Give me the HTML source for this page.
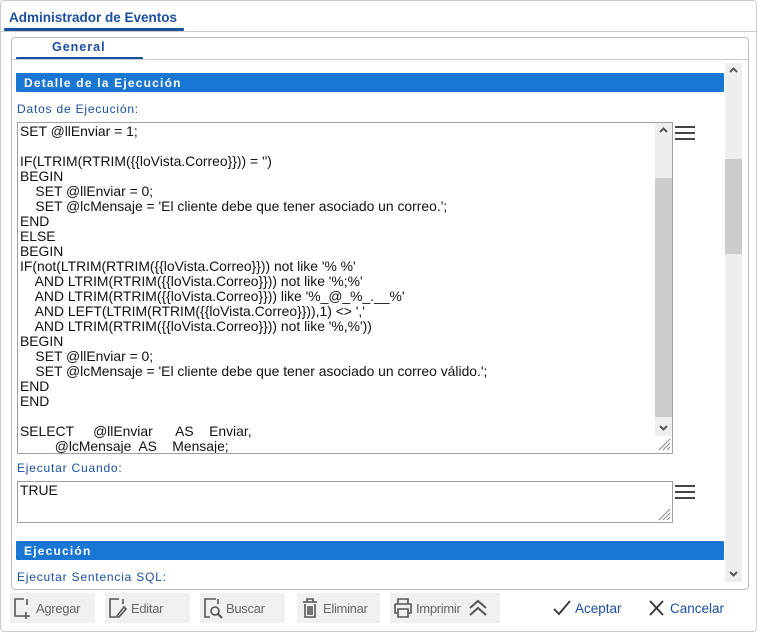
<!DOCTYPE html>
<html><head><meta charset="utf-8"><style>
*{box-sizing:border-box;margin:0;padding:0}
body{width:757px;height:632px;background:#fff;position:relative;overflow:hidden;font-family:"Liberation Sans",sans-serif}
.a{position:absolute}
.lbl{position:absolute;left:17px;font-size:12px;color:#1a4fa0;letter-spacing:0.8px}
.hdr{position:absolute;left:16px;width:708px;height:19px;background:#1976d2;color:#fff;font-weight:bold;font-size:12px;padding:3px 0 0 8px;letter-spacing:1.2px;border-radius:1px}
.ta{position:absolute;left:17px;width:656px;border:1px solid #a0a0a0;background:#fff;font-size:13.9px;color:#111;line-height:15px;padding:1px 0 0 2px;white-space:pre;overflow:hidden}
.hb{position:absolute;width:20px;height:14px;border-top:2px solid #444;border-bottom:2px solid #444}
.hb:after{content:"";position:absolute;left:0;right:0;top:4px;border-top:2px solid #444}
.btn{position:absolute;top:593px;height:30px;background:#f0f0f0;font-size:13px;color:#666;display:flex;align-items:center;letter-spacing:-0.3px}
.btn svg{margin:0 2px 0 2px}
</style></head><body>
<div class="a" style="left:0;top:0;width:757px;height:632px;border:1px solid #ccc;border-radius:4px"></div>
<div class="a" style="left:9px;top:10px;font-size:13.5px;font-weight:bold;color:#1a4fa0">Administrador de Eventos</div>
<div class="a" style="left:4px;top:28px;width:180px;height:3px;background:#1a4fa0;border-radius:1px"></div>
<div class="a" style="left:1px;top:31px;width:755px;height:1px;background:#ccc"></div>
<div class="a" style="left:11px;top:37px;width:738px;height:553px;border:1px solid #bbb;border-radius:4px"></div>
<div class="a" style="left:52px;top:40px;font-size:12.5px;font-weight:bold;color:#1a4fa0;letter-spacing:1px">General</div>
<div class="a" style="left:16px;top:57px;width:127px;height:3px;background:#1a4fa0;border-radius:1px"></div>
<div class="a" style="left:12px;top:59px;width:736px;height:1px;background:#ccc"></div>
<div class="a" style="left:725px;top:63px;width:17px;height:519px;background:#eee"></div>
<div class="a" style="left:725px;top:159px;width:17px;height:95px;background:#ccc"></div>
<svg class="a" style="left:728px;top:66px" width="11" height="8"><path d="M2 6L5.5 2.5L9 6" stroke="#555" stroke-width="2" fill="none"/></svg>
<svg class="a" style="left:728px;top:570px" width="11" height="8"><path d="M2 2L5.5 5.5L9 2" stroke="#555" stroke-width="2" fill="none"/></svg>
<div class="hdr" style="top:73px">Detalle de la Ejecución</div>
<div class="lbl" style="top:102px">Datos de Ejecución:</div>
<div class="ta" style="top:122px;height:332px">SET @llEnviar = 1;

IF(LTRIM(RTRIM({{loVista.Correo}})) = '')
BEGIN
    SET @llEnviar = 0;
    SET @lcMensaje = 'El cliente debe que tener asociado un correo.';
END
ELSE
BEGIN
IF(not(LTRIM(RTRIM({{loVista.Correo}})) not like '% %'
    AND LTRIM(RTRIM({{loVista.Correo}})) not like '%;%'
    AND LTRIM(RTRIM({{loVista.Correo}})) like '%_@_%_.__%'
    AND LEFT(LTRIM(RTRIM({{loVista.Correo}})),1) &lt;&gt; ','
    AND LTRIM(RTRIM({{loVista.Correo}})) not like '%,%'))
BEGIN
    SET @llEnviar = 0;
    SET @lcMensaje = 'El cliente debe que tener asociado un correo válido.';
END
END

SELECT     @llEnviar      AS    Enviar,
         @lcMensaje  AS    Mensaje;</div>
<div class="a" style="left:655px;top:123px;width:17px;height:313px;background:#eee"></div>
<div class="a" style="left:655px;top:178px;width:17px;height:239px;background:#ccc"></div>
<svg class="a" style="left:658px;top:126px" width="11" height="8"><path d="M2 6L5.5 2.5L9 6" stroke="#555" stroke-width="2" fill="none"/></svg>
<svg class="a" style="left:658px;top:424px" width="11" height="8"><path d="M2 2L5.5 5.5L9 2" stroke="#555" stroke-width="2" fill="none"/></svg>
<svg class="a" style="left:657px;top:437px" width="14" height="14"><path d="M2 13L13 2M6 13L13 6M10 13L13 10" stroke="#888" stroke-width="1"/></svg>
<div class="hb" style="left:675px;top:126px"></div>
<div class="lbl" style="top:461px">Ejecutar Cuando:</div>
<div class="ta" style="top:481px;height:42px;padding-top:1px">TRUE</div>
<svg class="a" style="left:657px;top:507px" width="14" height="14"><path d="M2 13L13 2M6 13L13 6M10 13L13 10" stroke="#888" stroke-width="1"/></svg>
<div class="hb" style="left:675px;top:485px"></div>
<div class="hdr" style="top:541px">Ejecución</div>
<div class="lbl" style="top:570px">Ejecutar Sentencia SQL:</div>
<div class="btn" style="left:10px;width:85px"><svg width="22" height="24"><path d="M12 3H3V20H10M15 9V3M14 16V23M10 20H18" stroke="#555" stroke-width="1.6" fill="none"/></svg>Agregar</div>
<div class="btn" style="left:105px;width:85px"><svg width="22" height="24"><path d="M12 3H3V21H9M16 3V8M10 20L17 11L19 13L12 21H10Z" stroke="#555" stroke-width="1.6" fill="none"/></svg>Editar</div>
<div class="btn" style="left:200px;width:85px"><svg width="22" height="24"><path d="M14 3H3V21H8M16 3V8" stroke="#555" stroke-width="1.6" fill="none"/><circle cx="13" cy="15" r="4" stroke="#555" stroke-width="1.6" fill="none"/><path d="M16 18L20 22" stroke="#555" stroke-width="2"/></svg>Buscar</div>
<div class="btn" style="left:297px;width:83px"><svg width="22" height="24"><path d="M4 6H18M8 6V3H14V6M6 8V21H16V8M9 10V19M11 10V19M13 10V19" stroke="#555" stroke-width="1.6" fill="none"/></svg>Eliminar</div>
<div class="btn" style="left:390px;width:110px"><svg width="22" height="24"><path d="M6 8V3H16V8M3 8H19V17H16M6 17H3V8M6 13H16V21H6Z" stroke="#555" stroke-width="1.6" fill="none"/></svg>Imprimir<svg width="22" height="24" style="margin-left:6px"><path d="M3 12L11 5L19 12M3 19L11 12L19 19" stroke="#555" stroke-width="2" fill="none"/></svg></div>
<div class="a" style="left:552px;top:598px;font-size:13.5px;color:#1a4fa0;display:flex;align-items:center"><svg width="20" height="20"><path d="M2 11L7 16L18 3" stroke="#333" stroke-width="1.8" fill="none"/></svg><span style="margin-left:3px">Aceptar</span></div>
<div class="a" style="left:648px;top:598px;font-size:13.5px;color:#1a4fa0;display:flex;align-items:center"><svg width="18" height="20"><path d="M2 3L15 17M15 3L2 17" stroke="#333" stroke-width="1.8" fill="none"/></svg><span style="margin-left:4px">Cancelar</span></div>
</body></html>
